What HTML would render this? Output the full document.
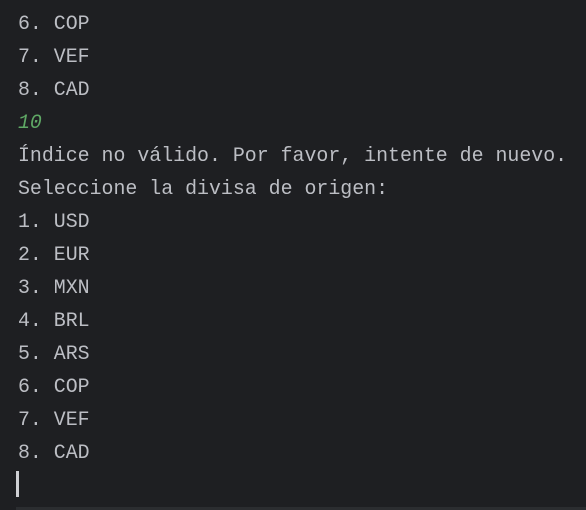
<!DOCTYPE html>
<html><head><style>
html,body{margin:0;padding:0;background:#1e1f22;width:586px;height:510px;overflow:hidden;}
.c{position:absolute;left:18px;top:7px;font-family:"Liberation Mono",monospace;font-size:19.9px;line-height:33px;color:#bcbec4;white-space:pre;}
.g{color:#5fa865;font-style:italic;}
.cur{position:absolute;left:16px;top:471px;width:3px;height:26px;background:#cfd0d4;}
.bot{position:absolute;left:16px;top:507px;width:570px;height:3px;background:#2b2d30;}
</style></head><body>
<div class="c">6. COP
7. VEF
8. CAD
<span class="g">10</span>
Índice no válido. Por favor, intente de nuevo.
Seleccione la divisa de origen:
1. USD
2. EUR
3. MXN
4. BRL
5. ARS
6. COP
7. VEF
8. CAD</div>
<div class="cur"></div>
<div class="bot"></div>
</body></html>
